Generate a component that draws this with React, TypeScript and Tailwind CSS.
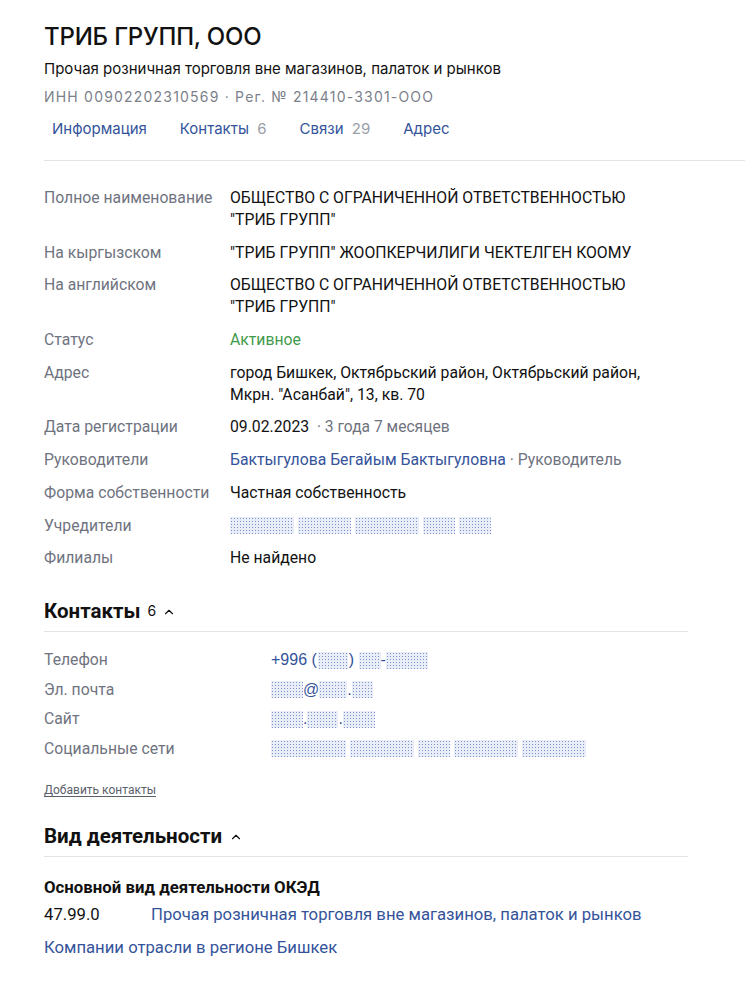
import { ChevronUp } from 'lucide-react';

const masked =
  'inline-block h-[17px] align-middle bg-[radial-gradient(circle,#7d93cf_0.75px,#e8edf8_0.9px)] bg-size-[3px_3px]';

function Mask({ w }: { w: number }) {
  return <span className={masked} style={{ width: w }} />;
}

const rows: { label: string; value: React.ReactNode }[] = [
  {
    label: 'Полное наименование',
    value: (
      <>
        ОБЩЕСТВО С ОГРАНИЧЕННОЙ ОТВЕТСТВЕННОСТЬЮ
        <br />
        "ТРИБ ГРУПП"
      </>
    ),
  },
  { label: 'На кыргызском', value: '"ТРИБ ГРУПП" ЖООПКЕРЧИЛИГИ ЧЕКТЕЛГЕН КООМУ' },
  {
    label: 'На английском',
    value: (
      <>
        ОБЩЕСТВО С ОГРАНИЧЕННОЙ ОТВЕТСТВЕННОСТЬЮ
        <br />
        "ТРИБ ГРУПП"
      </>
    ),
  },
  { label: 'Статус', value: <span className="text-[#3f9a4a]">Активное</span> },
  {
    label: 'Адрес',
    value: (
      <>
        город Бишкек, Октябрьский район, Октябрьский район,
        <br />
        Мкрн. "Асанбай", 13, кв. 70
      </>
    ),
  },
  {
    label: 'Дата регистрации',
    value: (
      <>
        09.02.2023 <span className="text-[15.6px] text-[#6f7380]">&nbsp;· 3 года 7 месяцев</span>
      </>
    ),
  },
  {
    label: 'Руководители',
    value: (
      <>
        <a className="text-[#34539b]">Бактыгулова Бегайым Бактыгуловна</a>
        <span className="text-[#6f7380]"> · Руководитель</span>
      </>
    ),
  },
  { label: 'Форма собственности', value: 'Частная собственность' },
  {
    label: 'Учредители',
    value: (
      <span className="flex gap-[4px] pt-[2px]">
        <Mask w={64} />
        <Mask w={53} />
        <Mask w={64} />
        <Mask w={32} />
        <Mask w={32} />
      </span>
    ),
  },
  { label: 'Филиалы', value: 'Не найдено' },
];

export default function App() {
  return (
    <div className="min-h-screen bg-white pl-[44px] pt-[20px] text-[#111] font-['Roboto',sans-serif]">
      <h1 className="font-['Inter',sans-serif] text-[24px] font-medium leading-[34px] tracking-[-0.2px] text-[#111]">
        ТРИБ ГРУПП, ООО
      </h1>
      <p className="mt-[5px] font-['Inter',sans-serif] text-[15px] leading-[20px] text-[#111]">
        Прочая розничная торговля вне магазинов, палаток и рынков
      </p>
      <p className="mt-[8px] font-['Inter',sans-serif] text-[14px] leading-[20px] tracking-[1.2px] text-[#7b7f8b]">
        ИНН 00902202310569 · Рег. № 214410-3301-ООО
      </p>
      <nav className="mt-[12px] flex gap-[33px] pl-[8px] font-['Inter',sans-serif] text-[15px] leading-[20px] text-[#34539b]">
        <a>Информация</a>
        <a>
          Контакты <span className="ml-[4px] text-[#9a9ea8]">6</span>
        </a>
        <a>
          Связи <span className="ml-[4px] text-[#9a9ea8]">29</span>
        </a>
        <a>Адрес</a>
      </nav>
      <div className="mt-[21px] h-px bg-[#e3e4e8]" />

      <div className="mt-[26px] w-[644px] text-[15.75px] leading-[22px]">
        {rows.map((r) => (
          <div key={r.label} className="mb-[10.7px] flex">
            <div className="w-[186px] shrink-0 text-[#6f7380]">{r.label}</div>
            <div className="text-[#111]">{r.value}</div>
          </div>
        ))}
      </div>

      <div className="mt-[28px] w-[644px]">
        <h2 className="flex items-center pb-[6px] text-[20.5px] font-bold leading-[28px] text-[#111]">
          Контакты
          <span className="ml-[7px] text-[14px] font-normal font-['Inter',sans-serif]">6</span>
          <ChevronUp size={14} strokeWidth={2} className="ml-[6px] mt-[1px]" />
        </h2>
        <div className="h-px bg-[#e3e4e8]" />
        <div className="mt-[17px] text-[15.75px] leading-[22px]">
          <div className="flex h-[29.5px]">
            <div className="w-[227px] shrink-0 text-[#6f7380]">Телефон</div>
            <div className="flex items-center self-start font-['Liberation_Sans',sans-serif] text-[16px] text-[#34539b]">
              +996&nbsp;(<span className="mx-[1px]"><Mask w={30} /></span>)&nbsp;<Mask w={22} />-<Mask w={42} />
            </div>
          </div>
          <div className="flex h-[29.5px]">
            <div className="w-[227px] shrink-0 text-[#6f7380]">Эл. почта</div>
            <div className="flex items-center self-start font-['Liberation_Sans',sans-serif] text-[16px] text-[#34539b]">
              <Mask w={32} />@<Mask w={28} />.<Mask w={21} />
            </div>
          </div>
          <div className="flex h-[29.5px]">
            <div className="w-[227px] shrink-0 text-[#6f7380]">Сайт</div>
            <div className="flex items-center self-start font-['Liberation_Sans',sans-serif] text-[16px] text-[#34539b]">
              <Mask w={32} />.<Mask w={31} />.<Mask w={32} />
            </div>
          </div>
          <div className="flex h-[29.5px]">
            <div className="w-[227px] shrink-0 text-[#6f7380]">Социальные сети</div>
            <div className="flex items-center gap-[4px] self-start pt-[2px]">
              <Mask w={75} />
              <Mask w={64} />
              <Mask w={32} />
              <Mask w={64} />
              <Mask w={64} />
            </div>
          </div>
        </div>
        <a className="mt-[14px] inline-block text-[12px] leading-[18px] text-[#5b5f6b] underline underline-offset-2">
          Добавить контакты
        </a>
      </div>

      <div className="mt-[21px] w-[644px]">
        <h2 className="flex items-center pb-[6px] text-[20.5px] font-bold leading-[28px] text-[#111]">
          Вид деятельности
          <ChevronUp size={14} strokeWidth={2} className="ml-[7px] mt-[1px]" />
        </h2>
        <div className="h-px bg-[#e3e4e8]" />
        <h3 className="mt-[20px] text-[16.8px] font-bold leading-[20px] text-[#111]">
          Основной вид деятельности ОКЭД
        </h3>
        <div className="mt-[7px] flex text-[16.7px] leading-[22px]">
          <span className="w-[107px] shrink-0 text-[#111]">47.99.0</span>
          <a className="text-[#34539b]">Прочая розничная торговля вне магазинов, палаток и рынков</a>
        </div>
        <a className="mt-[11px] block text-[16.7px] leading-[22px] text-[#34539b]">
          Компании отрасли в регионе Бишкек
        </a>
      </div>
    </div>
  );
}
